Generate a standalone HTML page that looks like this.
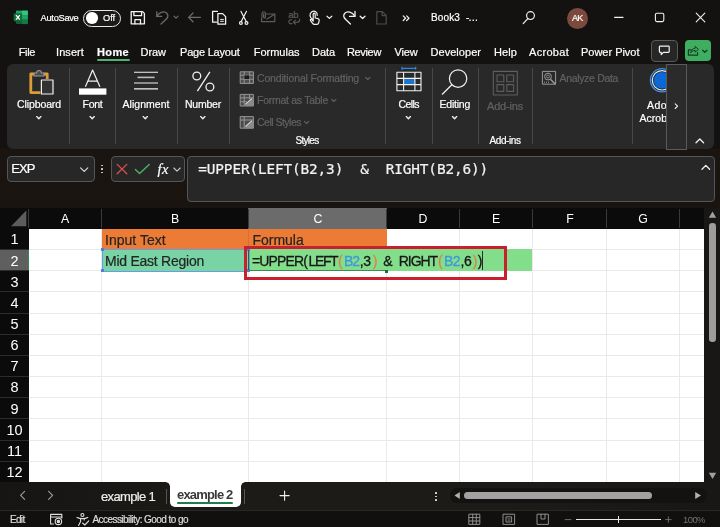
<!DOCTYPE html>
<html><head><meta charset="utf-8"><title>Excel</title><style>
html,body{margin:0;padding:0;}
body{width:720px;height:527px;overflow:hidden;background:#131211;position:relative;font-family:'Liberation Sans',sans-serif;}
.t{position:absolute;white-space:pre;line-height:20px;height:20px;-webkit-text-stroke:0.2px currentColor;}
.a{position:absolute;}
svg{position:absolute;overflow:visible;}
</style></head><body>
<div class="a" style="left:7px;top:64px;width:707px;height:85px;background:#292929;border-radius:6px;"></div>
<div class="a" style="left:69.0px;top:68px;width:1px;height:76px;background:#484848;"></div>
<div class="a" style="left:115.0px;top:68px;width:1px;height:76px;background:#484848;"></div>
<div class="a" style="left:177.0px;top:68px;width:1px;height:76px;background:#484848;"></div>
<div class="a" style="left:229.0px;top:68px;width:1px;height:76px;background:#484848;"></div>
<div class="a" style="left:385.0px;top:68px;width:1px;height:76px;background:#484848;"></div>
<div class="a" style="left:431.5px;top:68px;width:1px;height:76px;background:#484848;"></div>
<div class="a" style="left:478.0px;top:68px;width:1px;height:76px;background:#484848;"></div>
<div class="a" style="left:531.5px;top:68px;width:1px;height:76px;background:#484848;"></div>
<div class="a" style="left:632.0px;top:68px;width:1px;height:76px;background:#484848;"></div>
<div class="a" style="left:666px;top:63.5px;width:19px;height:84px;background:#2b2b2b;border:1px solid #5a5a5a;box-sizing:content-box;z-index:4;"></div>
<div class="a" style="left:96.5px;top:59px;width:33px;height:2px;background:#4fb36e;border-radius:1px;"></div>
<div class="a" style="left:651px;top:40px;width:25px;height:19.5px;background:#262626;border:1px solid #5a5a5a;border-radius:4px;"></div>
<div class="a" style="left:684.5px;top:40px;width:26.5px;height:20.5px;background:#3fae60;border-radius:4px;"></div>
<div class="a" style="left:83px;top:9.5px;width:36px;height:15px;border:1px solid #e8e8e8;border-radius:9px;background:#1b1a18;"></div>
<div class="a" style="left:86.4px;top:12.3px;width:11.4px;height:11.4px;background:#fff;border-radius:50%;"></div>
<div class="a" style="left:566.5px;top:7.5px;width:21px;height:21px;background:#7b4a3c;border-radius:50%;"></div>
<div class="a" style="left:0px;top:149px;width:720px;height:59px;background:linear-gradient(#1a1511,#19140f);"></div>
<div class="a" style="left:7px;top:156px;width:85.5px;height:23.5px;background:#272727;border:1px solid #555;border-radius:4px;"></div>
<div class="a" style="left:110.5px;top:156px;width:72.5px;height:23.5px;background:#272727;border:1px solid #555;border-radius:4px;"></div>
<div class="a" style="left:187px;top:156px;width:526px;height:43.5px;background:#272727;border:1px solid #555;border-radius:4px;"></div>
<div class="a" style="left:101.2px;top:164.7px;width:1.7px;height:1.7px;background:#ddd;border-radius:50%;"></div>
<div class="a" style="left:101.2px;top:168.1px;width:1.7px;height:1.7px;background:#ddd;border-radius:50%;"></div>
<div class="a" style="left:101.2px;top:171.5px;width:1.7px;height:1.7px;background:#ddd;border-radius:50%;"></div>
<div class="a" style="left:0px;top:208px;width:704px;height:20.5px;background:#0b0b0b;"></div>
<div class="a" style="left:0px;top:228px;width:28.75px;height:254px;background:#0b0b0b;"></div>
<div class="a" style="left:28.75px;top:228.5px;width:675.25px;height:253.5px;background:#fff;"></div>
<div class="a" style="left:248.3px;top:208px;width:138.4px;height:20.5px;background:#6b6b6b;"></div>
<div class="a" style="left:0px;top:250px;width:28.2px;height:20.8px;background:#5f5f5f;"></div>
<div class="a" style="left:27.6px;top:250px;width:1.2px;height:20.8px;background:#2e8b57;"></div>
<div class="a" style="left:28.25px;top:209px;width:1px;height:19px;background:#3a3a3a;"></div>
<div class="a" style="left:101.25px;top:209px;width:1px;height:19px;background:#3a3a3a;"></div>
<div class="a" style="left:247.5px;top:209px;width:1px;height:19px;background:#3a3a3a;"></div>
<div class="a" style="left:386.25px;top:209px;width:1px;height:19px;background:#3a3a3a;"></div>
<div class="a" style="left:459.0px;top:209px;width:1px;height:19px;background:#3a3a3a;"></div>
<div class="a" style="left:532.0px;top:209px;width:1px;height:19px;background:#3a3a3a;"></div>
<div class="a" style="left:605.75px;top:209px;width:1px;height:19px;background:#3a3a3a;"></div>
<div class="a" style="left:678.75px;top:209px;width:1px;height:19px;background:#3a3a3a;"></div>
<svg style="left:0;top:208px" width="29" height="21"><polygon points="11,18.2 26.3,2.5 26.3,18.2" fill="#5c5c5c"/></svg>
<div class="a" style="left:101.25px;top:228.5px;width:1px;height:253.5px;background:#e9e9e9;"></div>
<div class="a" style="left:247.5px;top:228.5px;width:1px;height:253.5px;background:#e9e9e9;"></div>
<div class="a" style="left:386.25px;top:228.5px;width:1px;height:253.5px;background:#e9e9e9;"></div>
<div class="a" style="left:459.0px;top:228.5px;width:1px;height:253.5px;background:#e9e9e9;"></div>
<div class="a" style="left:532.0px;top:228.5px;width:1px;height:253.5px;background:#e9e9e9;"></div>
<div class="a" style="left:605.75px;top:228.5px;width:1px;height:253.5px;background:#e9e9e9;"></div>
<div class="a" style="left:678.75px;top:228.5px;width:1px;height:253.5px;background:#e9e9e9;"></div>
<div class="a" style="left:28.75px;top:249.15px;width:675.25px;height:1px;background:#e9e9e9;"></div>
<div class="a" style="left:28.75px;top:270.3px;width:675.25px;height:1px;background:#e9e9e9;"></div>
<div class="a" style="left:28.75px;top:291.45px;width:675.25px;height:1px;background:#e9e9e9;"></div>
<div class="a" style="left:28.75px;top:312.6px;width:675.25px;height:1px;background:#e9e9e9;"></div>
<div class="a" style="left:28.75px;top:333.75px;width:675.25px;height:1px;background:#e9e9e9;"></div>
<div class="a" style="left:28.75px;top:354.9px;width:675.25px;height:1px;background:#e9e9e9;"></div>
<div class="a" style="left:28.75px;top:376.04999999999995px;width:675.25px;height:1px;background:#e9e9e9;"></div>
<div class="a" style="left:28.75px;top:397.2px;width:675.25px;height:1px;background:#e9e9e9;"></div>
<div class="a" style="left:28.75px;top:418.35px;width:675.25px;height:1px;background:#e9e9e9;"></div>
<div class="a" style="left:28.75px;top:439.5px;width:675.25px;height:1px;background:#e9e9e9;"></div>
<div class="a" style="left:28.75px;top:460.65px;width:675.25px;height:1px;background:#e9e9e9;"></div>
<div class="a" style="left:0px;top:249.15px;width:28.75px;height:1px;background:#2c2c2c;"></div>
<div class="a" style="left:0px;top:270.3px;width:28.75px;height:1px;background:#2c2c2c;"></div>
<div class="a" style="left:0px;top:291.45px;width:28.75px;height:1px;background:#2c2c2c;"></div>
<div class="a" style="left:0px;top:312.6px;width:28.75px;height:1px;background:#2c2c2c;"></div>
<div class="a" style="left:0px;top:333.75px;width:28.75px;height:1px;background:#2c2c2c;"></div>
<div class="a" style="left:0px;top:354.9px;width:28.75px;height:1px;background:#2c2c2c;"></div>
<div class="a" style="left:0px;top:376.04999999999995px;width:28.75px;height:1px;background:#2c2c2c;"></div>
<div class="a" style="left:0px;top:397.2px;width:28.75px;height:1px;background:#2c2c2c;"></div>
<div class="a" style="left:0px;top:418.35px;width:28.75px;height:1px;background:#2c2c2c;"></div>
<div class="a" style="left:0px;top:439.5px;width:28.75px;height:1px;background:#2c2c2c;"></div>
<div class="a" style="left:0px;top:460.65px;width:28.75px;height:1px;background:#2c2c2c;"></div>
<div class="a" style="left:101.75px;top:228.5px;width:285px;height:21.15px;background:#ec7b36;"></div>
<div class="a" style="left:247.6px;top:228.5px;width:1px;height:21.15px;background:#d96f30;"></div>
<div class="a" style="left:101.75px;top:249.65px;width:146.5px;height:21.15px;background:#78d4a5;"></div>
<div class="a" style="left:248.2px;top:249.35px;width:284.3px;height:21.45px;background:#83de8c;"></div>
<div class="a" style="left:101.5px;top:249.15px;width:146px;height:21.15px;border:1px solid #6b9be0;box-sizing:content-box;"></div>
<div class="a" style="left:100.5px;top:248.15px;width:3px;height:3px;background:#4a7fe0;"></div>
<div class="a" style="left:246.5px;top:248.15px;width:3px;height:3px;background:#4a7fe0;"></div>
<div class="a" style="left:100.5px;top:269.3px;width:3px;height:3px;background:#4a7fe0;"></div>
<div class="a" style="left:246.5px;top:269.3px;width:3px;height:3px;background:#4a7fe0;"></div>
<div class="a" style="left:247.8px;top:249.95000000000002px;width:1.6px;height:20.349999999999998px;background:#1f6b3c;"></div>
<div class="a" style="left:249px;top:269.8px;width:136px;height:1.3px;background:#3d8a55;"></div>
<div class="a" style="left:385px;top:269.8px;width:3px;height:3px;background:#1f6b3c;"></div>
<div class="a" style="left:482.4px;top:250.8px;width:1px;height:19px;background:#2a2a2a;"></div>
<div class="a" style="left:243.7px;top:246px;width:257.3px;height:28.2px;border:3px solid #ca202e;box-sizing:content-box;"></div>
<div class="a" style="left:704px;top:208px;width:16px;height:274px;background:#181716;"></div>
<div class="a" style="left:709.3px;top:222.8px;width:6.4px;height:119.7px;background:#9d9d9d;border-radius:3.2px;"></div>
<svg style="left:704px;top:208px" width="16" height="274"><polygon points="8.5,3.5 12.2,9.8 4.8,9.8" fill="#a0a0a0"/><polygon points="8.5,271 12.2,264.7 4.8,264.7" fill="#a0a0a0"/></svg>
<div class="a" style="left:0px;top:482px;width:720px;height:28px;background:linear-gradient(90deg,#171513,#1d1b18 30%,#1d1b18 70%,#181716);"></div>
<div class="a" style="left:169.5px;top:482px;width:71px;height:25px;background:#fff;border-radius:0 0 5px 5px;"></div>
<div class="a" style="left:165.5px;top:482px;width:4px;height:4px;background:radial-gradient(circle at 0% 100%,transparent 3.4px,#fff 4px);"></div>
<div class="a" style="left:240.5px;top:482px;width:4px;height:4px;background:radial-gradient(circle at 100% 100%,transparent 3.4px,#fff 4px);"></div>
<div class="a" style="left:177px;top:501.5px;width:55.5px;height:2px;background:#1e7e45;border-radius:1px;"></div>
<div class="a" style="left:166px;top:489px;width:1px;height:15px;background:#555;"></div>
<div class="a" style="left:243.5px;top:489px;width:1px;height:15px;background:#555;"></div>
<div class="a" style="left:450px;top:488px;width:257px;height:15px;background:#131211;border-radius:7px;"></div>
<div class="a" style="left:463.75px;top:492px;width:188.5px;height:7px;background:#a2a2a2;border-radius:3.5px;"></div>
<svg style="left:450px;top:488px" width="257" height="15"><polygon points="4.5,7.5 9.8,4 9.8,11" fill="#b0b0b0"/><polygon points="251,7.5 245.2,4 245.2,11" fill="#b0b0b0"/></svg>
<div class="a" style="left:434.9px;top:492.34999999999997px;width:1.7px;height:1.7px;background:#e6e6e6;border-radius:50%;"></div>
<div class="a" style="left:434.9px;top:495.65px;width:1.7px;height:1.7px;background:#e6e6e6;border-radius:50%;"></div>
<div class="a" style="left:434.9px;top:498.95px;width:1.7px;height:1.7px;background:#e6e6e6;border-radius:50%;"></div>
<div class="a" style="left:0px;top:510px;width:720px;height:17px;background:#12100e;"></div>
<div class="a" style="left:0px;top:509.5px;width:720px;height:1px;background:#2a2826;"></div>
<div class="a" style="left:576px;top:519px;width:85px;height:1.2px;background:#e8e8e8;"></div>
<div class="a" style="left:617.6px;top:516px;width:1.2px;height:6.6px;background:#e8e8e8;"></div>
<!-- Excel logo -->
<svg style="left:0;top:0" width="60" height="34">
  <rect x="16" y="10.7" width="11.8" height="13.4" rx="1.2" fill="#185c37"/>
  <rect x="16" y="10.7" width="11.8" height="4.5" fill="#21a366"/>
  <rect x="16" y="15.2" width="11.8" height="4.4" fill="#107c41"/>
  <rect x="21.9" y="10.7" width="5.9" height="4.5" fill="#33c481"/>
  <rect x="21.9" y="15.2" width="5.9" height="4.4" fill="#21a366"/>
  <rect x="21.9" y="19.6" width="5.9" height="4.5" fill="#107c41"/>
  <rect x="13.7" y="13.2" width="8.4" height="8.4" rx="1" fill="#0e6e3a"/>
  <path d="M16 15.2 L19.8 19.7 M19.8 15.2 L16 19.7" stroke="#fff" stroke-width="1.3" fill="none"/>
</svg>
<!-- QAT icons -->
<svg style="left:0;top:0" width="720" height="34" fill="none" stroke-linecap="round" stroke-linejoin="round">
  <!-- save -->
  <g stroke="#f2f2f2" stroke-width="1.3">
    <path d="M131.2 11.6 H142.6 L144.4 13.4 V23.8 H131.2 Z"/>
    <path d="M133.9 11.6 V15.6 H141.6 V11.6"/>
    <path d="M134.9 23.8 V19.6 H140.5 V23.8"/>
  </g>
  <!-- undo (grey) -->
  <g stroke="#6c6c6c" stroke-width="1.3">
    <path d="M156.8 11.8 V16.4 H161.6"/>
    <path d="M157 16.2 C159.5 12 164.3 10.6 166.8 13.2 C169 15.6 167.6 18 165.6 19.8 L161 24"/>
    <path d="M174 16.2 L176 18.2 L178 16.2" stroke-width="1.2"/>
  </g>
  <!-- left arrow grey -->
  <g stroke="#6c6c6c" stroke-width="1.3">
    <path d="M188.6 17.4 H200.4 M193 13 L188.6 17.4 L193 21.8"/>
  </g>
  <!-- copy -->
  <g stroke="#f2f2f2" stroke-width="1.3">
    <path d="M217.4 11.4 H212.6 V22.2 H216.6"/>
    <path d="M217.9 13.6 H222.6 L225.6 16.6 V24.2 H217.9 Z"/>
    <path d="M220.6 19.4 H223.4 M220.6 21.3 H223.4" stroke-width="1"/>
  </g>
  <!-- scissors -->
  <g stroke="#f2f2f2" stroke-width="1.2">
    <path d="M241 11.4 L246.2 21.6 M246.4 11.4 L241.2 21.6"/>
    <circle cx="240.9" cy="23" r="1.4"/><circle cx="246.5" cy="23" r="1.4"/>
  </g>
  <!-- mail w/ clip (grey) -->
  <g stroke="#5c5c5c" stroke-width="1.2">
    <path d="M266.5 14 H274.8 V21.6 H261.6 V18"/>
    <path d="M267 19 L274.6 14.2"/>
    <path d="M262 17.2 V13.4 C262 11.2 265.4 11.2 265.4 13.4 V17 C265.4 18.4 263.6 18.4 263.6 17 V13.8"/>
  </g>
  <!-- ab replace (grey) -->
  <g stroke="#5c5c5c" stroke-width="1.1">
    <path d="M291.6 19.8 C289.4 19.4 288.4 21 289 22.6 C289.6 24 291.2 24 292 23.6"/>
    <path d="M299.6 19 C300 21.4 298.6 22.2 296.6 22.2 H293.6 M295.4 20.2 L293.4 22.2 L295.4 24.2"/>
  </g>
  <!-- touch (white) -->
  <g stroke="#f2f2f2" stroke-width="1.2">
    <path d="M312.6 19.4 C309.6 17.8 309 13.6 311.8 11.8 C314.6 10.2 317.6 12.2 317.2 15.4"/>
    <path d="M313.2 21.2 V14.2 C313.2 12.8 315.2 12.8 315.2 14.2 V18 L318 18.6 C319 18.8 319.4 19.6 319.2 20.6 L318.6 23 C318.4 23.8 317.8 24.3 317 24.3 H314.4 C313.6 24.3 313 23.9 312.6 23.3 L310.4 20.4 C310 19.6 311 18.8 311.8 19.6 Z"/>
    <path d="M327 16.2 L329.4 18.4 L331.8 16.2"/>
  </g>
  <!-- redo (white) -->
  <g stroke="#f2f2f2" stroke-width="1.3">
    <path d="M355 11.4 V16.4 H349.6"/>
    <path d="M354.8 16.2 C352.2 12 347.4 10.6 344.8 13.2 C342.6 15.6 344 18 346 19.8 L350.4 24"/>
    <path d="M360.2 16.2 L362.6 18.5 L365 16.2"/>
  </g>
  <!-- new doc (dark grey) -->
  <g stroke="#4c4c4c" stroke-width="1.2">
    <path d="M376.8 11.6 H382.4 L386.2 15.4 V24 H376.8 Z M382.2 11.8 V15.6 H386"/>
  </g>
  <!-- >> -->
  <g stroke="#f2f2f2" stroke-width="1.2">
    <path d="M403.2 15.9 L405.6 18.2 L403.2 20.5 M406.6 15.9 L409 18.2 L406.6 20.5"/>
  </g>
  <!-- search -->
  <g stroke="#f2f2f2" stroke-width="1.2">
    <circle cx="530.5" cy="15.6" r="3.9"/><path d="M527.8 18.6 L523.2 23.6"/>
  </g>
  <!-- window controls -->
  <g stroke="#f2f2f2" stroke-width="1.1">
    <path d="M614.6 17.4 H623"/>
    <rect x="655.4" y="13.2" width="8.4" height="8.4" rx="1.5"/>
    <path d="M696.2 13.2 L704.8 21.8 M704.8 13.2 L696.2 21.8"/>
  </g>
</svg>
<span class="t" style="left:288.2px;top:4.6px;font-size:9.5px;color:#5c5c5c;letter-spacing:-0.1px;">ab</span>
<!-- comment / share -->
<svg style="left:640px;top:34px" width="80" height="32" fill="none" stroke-linecap="round" stroke-linejoin="round">
  <path d="M20.2 12.2 H28.4 Q29.2 12.2 29.2 13 V17.6 Q29.2 18.4 28.4 18.4 H23.4 L21.2 20.6 V18.4 H20.2 Q19.4 18.4 19.4 17.6 V13 Q19.4 12.2 20.2 12.2 Z" stroke="#f2f2f2" stroke-width="1.2"/>
  <path d="M51 15.8 H48.4 V21.2 H57.6 V18.6" stroke="#143d24" stroke-width="1.2"/>
  <path d="M50.8 18.6 C51.2 15.6 53 14.4 55.2 14.2 V12.4 L58.4 15.4 L55.2 18.2 V16.4 C53.4 16.4 52 17 50.8 18.6 Z" stroke="#143d24" stroke-width="1"/>
  <path d="M62.6 16.2 L64.8 18.3 L67 16.2" stroke="#143d24" stroke-width="1.2"/>
</svg>
<!-- RIBBON icons -->
<svg style="left:0;top:64px" width="720" height="86" fill="none" stroke-linejoin="round">
  <!-- clipboard -->
  <path d="M34.4 10 H30.8 V28.6 H40.4" stroke="#dc9c3a" stroke-width="2.8"/>
  <path d="M43.6 10 H47.2 V15" stroke="#dc9c3a" stroke-width="2.8"/>
  <path d="M34 12 V9 H36.6 C36.6 5.6 41.4 5.6 41.4 9 H44 V12 Z" stroke="#9a9a9a" stroke-width="1.1" fill="#4a4a4a"/>
  <rect x="41.4" y="16" width="11.6" height="14" fill="#333" stroke="#f2f2f2" stroke-width="1.2"/>
  <!-- Font A -->
  <path d="M85.4 22.8 L92.6 6 L99.9 22.8 M88.2 17.2 H97" stroke="#f2f2f2" stroke-width="1.2"/>
  <rect x="79" y="24.4" width="27.4" height="6.3" fill="#fff"/>
  <!-- alignment -->
  <path d="M134 8.2 H158 M134 19 H158 M134 24.9 H158" stroke="#f2f2f2" stroke-width="1.1"/>
  <path d="M137.5 13.4 H154.6" stroke="#bdbdbd" stroke-width="1.6"/>
  <!-- percent -->
  <g stroke="#f2f2f2" stroke-width="1.3">
    <circle cx="196.8" cy="12" r="3.9"/><circle cx="209.9" cy="23" r="3.9"/>
    <path d="M209.9 7.8 L197.4 27.2"/>
  </g>
  <!-- chevrons under labels -->
  <g stroke="#f2f2f2" stroke-width="1.35" stroke-linecap="round">
    <path d="M36.7 52.6 L38.8 54.7 L40.9 52.6"/>
    <path d="M90.1 52.6 L92.2 54.7 L94.3 52.6"/>
    <path d="M143.2 52.6 L145.3 54.7 L147.4 52.6"/>
    <path d="M200.7 52.6 L202.8 54.7 L204.9 52.6"/>
    <path d="M406.3 52.6 L408.4 54.7 L410.5 52.6"/>
    <path d="M452.5 52.6 L454.6 54.7 L456.7 52.6"/>
  </g>
  <!-- small style icons (grey) -->
  <g stroke="#959595" stroke-width="1">
    <rect x="240.2" y="7.8" width="13.2" height="11.6" fill="#4e4e4e"/>
    <path d="M240.2 11.2 H253.4 M240.2 15.2 H253.4 M244.2 7.8 V19.4 M249.6 7.8 V19.4"/>
    <rect x="244.4" y="11.4" width="5" height="3.6" fill="#1c1c1c" stroke="none"/>
    <rect x="240.2" y="30.4" width="13.2" height="11.6" fill="#4a4a4a"/>
    <path d="M240.2 33.8 H253.4 M240.2 37.8 H247 M244.2 30.4 V42 M249.6 30.4 V35"/>
    <path d="M245 42 L253.4 34.4 V42 Z" fill="#8a8a8a" stroke="none"/>
    <path d="M245.4 40.6 L252 34.6" stroke="#d0d0d0" stroke-width="1.3"/>
    <rect x="240.2" y="52.6" width="13.2" height="11.6" fill="#4a4a4a"/>
    <path d="M240.2 56 H253.4 M244.2 52.6 V64.2"/>
    <path d="M245 64.2 L253.4 56.6 V64.2 Z" fill="#8a8a8a" stroke="none"/>
    <path d="M245.4 62.8 L252 56.8" stroke="#d0d0d0" stroke-width="1.3"/>
  </g>
  <!-- chevrons after style labels -->
  <g stroke="#626262" stroke-width="1.1" stroke-linecap="round">
    <path d="M365.6 13.4 L367.8 15.5 L370 13.4"/>
    <path d="M331.6 35.4 L333.8 37.5 L336 35.4"/>
    <path d="M304.4 57.4 L306.6 59.5 L308.8 57.4"/>
  </g>
  <!-- cells -->
  <path d="M402 4.3 H415.7 M402 2.8 V5.8 M415.7 2.8 V5.8" stroke="#2b88e0" stroke-width="1.2"/>
  <rect x="403.6" y="14.4" width="11.3" height="6.2" fill="#1b76d2"/>
  <g stroke="#f2f2f2" stroke-width="1.1">
    <rect x="396.9" y="8.3" width="24.1" height="18.5"/>
    <path d="M396.9 14.4 H421 M396.9 20.6 H421 M403.6 8.3 V26.8 M414.9 8.3 V26.8"/>
  </g>
  <!-- editing magnifier -->
  <g stroke="#f2f2f2" stroke-width="1.2" stroke-linecap="round">
    <circle cx="458.1" cy="14.6" r="8.7"/><path d="M451.8 20.8 L442.3 30.2"/>
  </g>
  <!-- add-ins (grey) -->
  <g stroke="#5e5e5e" stroke-width="1.1">
    <rect x="493.3" y="7.4" width="24" height="23.6"/>
    <rect x="497" y="11" width="6.8" height="6.8"/><rect x="506.8" y="11" width="6.8" height="6.8"/>
    <rect x="497" y="20.6" width="6.8" height="6.8"/><rect x="506.8" y="20.6" width="6.8" height="6.8"/>
  </g>
  <!-- analyze data (grey) -->
  <g stroke="#9a9a9a" stroke-width="1">
    <rect x="542.4" y="7.4" width="13.2" height="12.8"/>
    <circle cx="548" cy="12.6" r="3.4"/><circle cx="548" cy="12.6" r="1.5" stroke-width="0.8"/>
    <path d="M550.4 15.2 L555.4 20.2" stroke-width="1.5"/>
    <path d="M544 18.2 H549" stroke-dasharray="1 1"/>
  </g>
  <!-- acrobat circle -->
  <circle cx="662" cy="16.3" r="11.6" stroke="#3f8fe6" stroke-width="1.3"/>
  <circle cx="662" cy="16.3" r="9.7" stroke="#dcebfb" stroke-width="1.2"/>
  <circle cx="662" cy="16.3" r="8.3" fill="#0b68d4"/>
</svg>
<!-- collapse chevron & scroll chevron (above button) -->
<svg style="left:0;top:64px;z-index:5" width="720" height="150" fill="none" stroke-linecap="round" stroke-linejoin="round">
  <path d="M675.2 39.9 L677.6 42.2 L675.2 44.5" stroke="#f2f2f2" stroke-width="1.1"/>
  <path d="M696 78.8 L699.8 75 L703.6 78.8" stroke="#f2f2f2" stroke-width="1.3"/>
  <path d="M702 105.2 L705.8 101.4 L709.6 105.2" stroke="#f2f2f2" stroke-width="1.3"/>
  <!-- name box chevron -->
  <path d="M80.6 103.8 L84.2 107.4 L87.8 103.8" stroke="#d8d8d8" stroke-width="1.2"/>
  <!-- X -->
  <path d="M117.2 100.4 L126.8 109.8 M126.8 100.4 L117.2 109.8" stroke="#e0504f" stroke-width="1.3"/>
  <!-- check -->
  <path d="M135.4 105.6 L139.6 109.6 L149.2 100.4" stroke="#4db360" stroke-width="1.4"/>
  <!-- fx chevron -->
  <path d="M173.8 104 L177 107.2 L180.2 104" stroke="#c8c8c8" stroke-width="1.1"/>
</svg>
<!-- sheet-tab / status icons -->
<svg style="left:0;top:482px" width="720" height="45" fill="none" stroke-linecap="round" stroke-linejoin="round">
  <path d="M24.6 9.4 L20.6 13.4 L24.6 17.4" stroke="#9a9a9a" stroke-width="1.2"/>
  <path d="M48.6 9.4 L52.6 13.4 L48.6 17.4" stroke="#9a9a9a" stroke-width="1.2"/>
  <path d="M280 13.6 H289.2 M284.6 9 V18.2" stroke="#f2f2f2" stroke-width="1.1"/>
  <!-- macro record icon -->
  <g stroke="#e0e0e0" stroke-width="1.1">
    <path d="M53.4 42 H50.6 V32.4 H61.8 V36"/>
    <path d="M50.6 35 H61.8"/>
    <circle cx="58.4" cy="39.4" r="3.2"/><circle cx="58.4" cy="39.4" r="1.2" fill="#e0e0e0"/>
  </g>
  <!-- accessibility -->
  <g stroke="#e0e0e0" stroke-width="1.1">
    <circle cx="82.4" cy="33" r="1.5"/>
    <path d="M77 35.4 C79 36.4 80.6 36.6 82.4 36.6 C84.2 36.6 85.8 36.4 87.8 35.4"/>
    <path d="M80.6 36.8 V39.6 L78.6 43.4 M84.2 36.8 V38"/>
    <path d="M82.6 41 L84.8 43 L88.8 38.8"/>
  </g>
  <!-- view icons (grey) -->
  <g stroke="#8e8e8e" stroke-width="1">
    <rect x="469.2" y="32.2" width="10.6" height="10.2"/>
    <path d="M469.2 35.6 H479.8 M469.2 39 H479.8 M472.7 32.2 V42.4 M476.3 32.2 V42.4"/>
    <rect x="503.4" y="32.2" width="11.2" height="10.2"/>
    <rect x="506.4" y="34.8" width="5.2" height="5.2"/>
    <path d="M508 36.8 H510 M508 38.2 H510" stroke-width="0.7"/>
    <path d="M537.4 32.2 H548.4 V42.4 H537.4 Z M541 32.2 V37 H545 V32.2"/>
  </g>
  <path d="M565.2 37.6 H571" stroke="#6a6a6a" stroke-width="1"/>
  <path d="M665.6 37.6 H671.2 M668.4 34.8 V40.4" stroke="#707070" stroke-width="0.9"/>
</svg>

<div class="a" style="left:0;top:0;width:720px;height:527px;will-change:transform;">
<span class="t" style="top:8.00px;font-size:9.3px;color:#fff;left:40.60px;letter-spacing:-0.304px;">AutoSave</span>
<span class="t" style="top:8.00px;font-size:9.3px;color:#fff;left:103.00px;letter-spacing:-0.078px;">Off</span>
<span class="t" style="top:8.00px;font-size:10px;color:#fff;left:431.00px;letter-spacing:0.128px;">Book3</span>
<span class="t" style="top:8.00px;font-size:10px;color:#fff;left:466.00px;letter-spacing:-1.172px;">-…</span>
<span class="t" style="top:8.00px;font-size:9px;color:#fff;left:572.00px;letter-spacing:-0.708px;">AK</span>
<span class="t" style="top:42.00px;font-size:11px;color:#fff;left:18.75px;letter-spacing:-0.371px;">File</span>
<span class="t" style="top:42.00px;font-size:11px;color:#fff;left:56.00px;letter-spacing:0.081px;">Insert</span>
<span class="t" style="top:42.00px;font-size:11px;color:#fff;left:140.50px;letter-spacing:-0.043px;">Draw</span>
<span class="t" style="top:42.00px;font-size:11px;color:#fff;left:180.00px;letter-spacing:-0.207px;">Page Layout</span>
<span class="t" style="top:42.00px;font-size:11px;color:#fff;left:253.75px;letter-spacing:-0.012px;">Formulas</span>
<span class="t" style="top:42.00px;font-size:11px;color:#fff;left:312.00px;letter-spacing:-0.062px;">Data</span>
<span class="t" style="top:42.00px;font-size:11px;color:#fff;left:347.00px;letter-spacing:-0.346px;">Review</span>
<span class="t" style="top:42.00px;font-size:11px;color:#fff;left:394.50px;letter-spacing:-0.164px;">View</span>
<span class="t" style="top:42.00px;font-size:11px;color:#fff;left:430.50px;letter-spacing:0.040px;">Developer</span>
<span class="t" style="top:42.00px;font-size:11px;color:#fff;left:494.00px;letter-spacing:0.094px;">Help</span>
<span class="t" style="top:42.00px;font-size:11px;color:#fff;left:529.00px;letter-spacing:0.297px;">Acrobat</span>
<span class="t" style="top:42.00px;font-size:11px;color:#fff;left:581.00px;letter-spacing:-0.018px;">Power Pivot</span>
<span class="t" style="top:42.00px;font-size:11px;color:#fff;font-weight:700;left:97.00px;letter-spacing:0.359px;">Home</span>
<span class="t" style="top:94.20px;font-size:10.5px;color:#fff;left:17.00px;letter-spacing:-0.106px;">Clipboard</span>
<span class="t" style="top:94.20px;font-size:10.5px;color:#fff;left:82.50px;letter-spacing:-0.254px;">Font</span>
<span class="t" style="top:94.20px;font-size:10.5px;color:#fff;left:122.50px;letter-spacing:0.033px;">Alignment</span>
<span class="t" style="top:94.20px;font-size:10.5px;color:#fff;left:185.00px;letter-spacing:-0.227px;">Number</span>
<span class="t" style="top:94.20px;font-size:10.5px;color:#fff;left:398.50px;letter-spacing:-0.569px;">Cells</span>
<span class="t" style="top:94.20px;font-size:10.5px;color:#fff;left:439.50px;letter-spacing:-0.230px;">Editing</span>
<span class="t" style="top:96.00px;font-size:11px;color:#626262;left:487.00px;letter-spacing:-0.185px;">Add-ins</span>
<span class="t" style="top:68.00px;font-size:10.5px;color:#626262;left:257.00px;letter-spacing:-0.165px;">Conditional Formatting</span>
<span class="t" style="top:90.00px;font-size:10.5px;color:#626262;left:257.00px;letter-spacing:-0.273px;">Format as Table</span>
<span class="t" style="top:112.00px;font-size:10.5px;color:#626262;left:257.00px;letter-spacing:-0.510px;">Cell Styles</span>
<span class="t" style="top:131.00px;font-size:10px;color:#fff;left:295.50px;letter-spacing:-0.706px;">Styles</span>
<span class="t" style="top:131.00px;font-size:10px;color:#fff;left:489.50px;letter-spacing:-0.415px;">Add-ins</span>
<span class="t" style="top:68.00px;font-size:10.5px;color:#626262;left:559.50px;letter-spacing:-0.329px;">Analyze Data</span>
<span class="t" style="top:95.00px;font-size:10.5px;color:#fff;left:647.00px;letter-spacing:0.438px;">Ado</span>
<span class="t" style="top:107.70px;font-size:10.5px;color:#fff;left:639.50px;letter-spacing:0.013px;">Acrob</span>
<span class="t" style="top:159.00px;font-size:13px;color:#fff;left:11.25px;letter-spacing:-0.922px;">EXP</span>
<span class="t" style="top:158.50px;font-size:14.5px;color:#fff;font-style:italic;font-family:'Liberation Serif',serif;left:157.50px;letter-spacing:0.516px;">fx</span>
<span class="t" style="top:159.00px;font-size:14.4px;color:#f2f2f2;font-family:'DejaVu Sans Mono','Liberation Mono',monospace;left:198.30px;letter-spacing:-0.143px;">=UPPER(LEFT(B2,3)  &  RIGHT(B2,6))</span>
<span class="t" style="top:208.90px;font-size:13.4px;color:#fff;left:45.00px;width:40px;text-align:center;-webkit-text-stroke:0;transform:scaleX(0.92);">A</span>
<span class="t" style="top:208.90px;font-size:13.4px;color:#fff;left:155.00px;width:40px;text-align:center;-webkit-text-stroke:0;transform:scaleX(0.92);">B</span>
<span class="t" style="top:208.90px;font-size:13.4px;color:#fff;left:297.50px;width:40px;text-align:center;-webkit-text-stroke:0;transform:scaleX(0.92);">C</span>
<span class="t" style="top:208.90px;font-size:13.4px;color:#fff;left:403.00px;width:40px;text-align:center;-webkit-text-stroke:0;transform:scaleX(0.92);">D</span>
<span class="t" style="top:208.90px;font-size:13.4px;color:#fff;left:476.00px;width:40px;text-align:center;-webkit-text-stroke:0;transform:scaleX(0.92);">E</span>
<span class="t" style="top:208.90px;font-size:13.4px;color:#fff;left:549.50px;width:40px;text-align:center;-webkit-text-stroke:0;transform:scaleX(0.92);">F</span>
<span class="t" style="top:208.90px;font-size:13.4px;color:#fff;left:623.00px;width:40px;text-align:center;-webkit-text-stroke:0;transform:scaleX(0.92);">G</span>
<span class="t" style="top:229.38px;font-size:14.5px;color:#fff;left:-5.50px;width:40px;text-align:center;-webkit-text-stroke:0;">1</span>
<span class="t" style="top:250.53px;font-size:14.5px;color:#fff;left:-5.50px;width:40px;text-align:center;-webkit-text-stroke:0;">2</span>
<span class="t" style="top:271.68px;font-size:14.5px;color:#fff;left:-5.50px;width:40px;text-align:center;-webkit-text-stroke:0;">3</span>
<span class="t" style="top:292.82px;font-size:14.5px;color:#fff;left:-5.50px;width:40px;text-align:center;-webkit-text-stroke:0;">4</span>
<span class="t" style="top:313.98px;font-size:14.5px;color:#fff;left:-5.50px;width:40px;text-align:center;-webkit-text-stroke:0;">5</span>
<span class="t" style="top:335.12px;font-size:14.5px;color:#fff;left:-5.50px;width:40px;text-align:center;-webkit-text-stroke:0;">6</span>
<span class="t" style="top:356.27px;font-size:14.5px;color:#fff;left:-5.50px;width:40px;text-align:center;-webkit-text-stroke:0;">7</span>
<span class="t" style="top:377.42px;font-size:14.5px;color:#fff;left:-5.50px;width:40px;text-align:center;-webkit-text-stroke:0;">8</span>
<span class="t" style="top:398.57px;font-size:14.5px;color:#fff;left:-5.50px;width:40px;text-align:center;-webkit-text-stroke:0;">9</span>
<span class="t" style="top:419.73px;font-size:14.5px;color:#fff;left:-5.50px;width:40px;text-align:center;-webkit-text-stroke:0;">10</span>
<span class="t" style="top:440.88px;font-size:14.5px;color:#fff;left:-5.50px;width:40px;text-align:center;-webkit-text-stroke:0;">11</span>
<span class="t" style="top:462.02px;font-size:14.5px;color:#fff;left:-5.50px;width:40px;text-align:center;-webkit-text-stroke:0;">12</span>
<span class="t" style="top:230.00px;font-size:14px;color:#242424;left:105.00px;letter-spacing:0.025px;">Input Text</span>
<span class="t" style="top:230.00px;font-size:14px;color:#242424;left:252.50px;letter-spacing:-0.016px;">Formula</span>
<span class="t" style="top:251.00px;font-size:14px;color:#242424;left:105.00px;letter-spacing:-0.248px;">Mid East Region</span>
<span class="t" style="top:251.00px;font-size:14px;color:#161616;left:252.00px;letter-spacing:-0.868px;-webkit-text-stroke:0.3px currentColor;">=UPPER(</span>
<span class="t" style="top:251.00px;font-size:14px;color:#161616;left:308.50px;letter-spacing:-1.359px;-webkit-text-stroke:0.3px currentColor;">LEFT</span>
<span class="t" style="top:251.00px;font-size:14px;color:#dc8246;left:338.00px;letter-spacing:-1.172px;-webkit-text-stroke:0.3px currentColor;">(</span>
<span class="t" style="top:251.00px;font-size:14px;color:#3f97dc;left:344.00px;letter-spacing:-1.062px;-webkit-text-stroke:0.3px currentColor;">B2</span>
<span class="t" style="top:251.00px;font-size:14px;color:#161616;left:359.80px;letter-spacing:-0.394px;-webkit-text-stroke:0.3px currentColor;">,3</span>
<span class="t" style="top:251.00px;font-size:14px;color:#dc8246;left:372.80px;letter-spacing:-1.472px;-webkit-text-stroke:0.3px currentColor;">)</span>
<span class="t" style="top:251.00px;font-size:14px;color:#161616;left:383.20px;letter-spacing:-1.144px;-webkit-text-stroke:0.3px currentColor;">&amp;</span>
<span class="t" style="top:251.00px;font-size:14px;color:#161616;left:398.80px;letter-spacing:-1.052px;-webkit-text-stroke:0.3px currentColor;">RIGHT</span>
<span class="t" style="top:251.00px;font-size:14px;color:#dc8246;left:438.00px;letter-spacing:-1.372px;-webkit-text-stroke:0.3px currentColor;">(</span>
<span class="t" style="top:251.00px;font-size:14px;color:#3f97dc;left:444.00px;letter-spacing:-0.613px;-webkit-text-stroke:0.3px currentColor;">B2</span>
<span class="t" style="top:251.00px;font-size:14px;color:#161616;left:460.50px;letter-spacing:-0.344px;-webkit-text-stroke:0.3px currentColor;">,6</span>
<span class="t" style="top:251.00px;font-size:14px;color:#dc8246;left:472.80px;letter-spacing:-1.472px;-webkit-text-stroke:0.3px currentColor;">)</span>
<span class="t" style="top:251.00px;font-size:14px;color:#161616;left:477.80px;letter-spacing:-1.172px;-webkit-text-stroke:0.3px currentColor;">)</span>
<span class="t" style="top:486.50px;font-size:13px;color:#eee;left:101.00px;letter-spacing:-0.665px;">example 1</span>
<span class="t" style="top:484.50px;font-size:13px;color:#3a3a3a;font-weight:700;left:177.00px;letter-spacing:-0.819px;-webkit-text-stroke:0;">example 2</span>
<span class="t" style="top:510.00px;font-size:10px;color:#ddd;left:10.00px;letter-spacing:-0.684px;">Edit</span>
<span class="t" style="top:510.00px;font-size:10px;color:#ddd;left:92.50px;letter-spacing:-0.560px;">Accessibility: Good to go</span>
<span class="t" style="top:510.00px;font-size:9.5px;color:#747474;left:683.00px;letter-spacing:-0.578px;-webkit-text-stroke:0;">100%</span>
</div>
</body></html>
